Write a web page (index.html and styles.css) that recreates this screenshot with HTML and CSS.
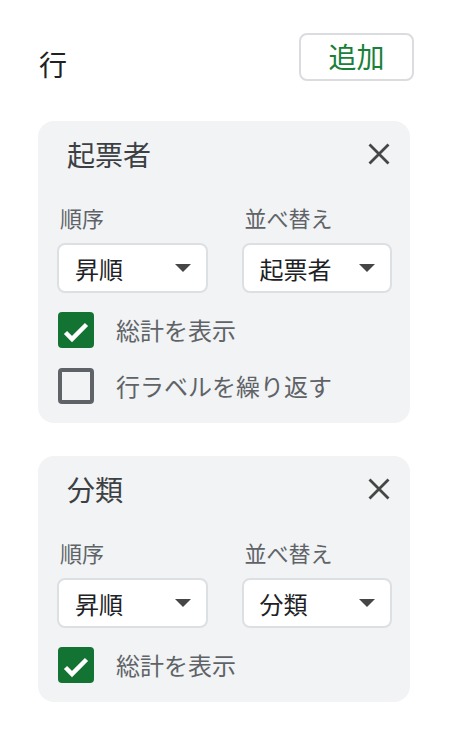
FILE: index.html
```html
<!DOCTYPE html>
<html lang="ja">
<head>
<meta charset="utf-8">
<link rel="stylesheet" href="styles.css">
</head>
<body>
<div class="panel">
  <div class="header">
    <div class="header-title">行</div>
    <button class="add-btn">追加</button>
  </div>

  <div class="card">
    <div class="card-head">
      <div class="card-title">起票者</div>
      <svg class="close" viewBox="0 0 24 24" width="24" height="24"><path d="M2.5 2.5 L21.5 21.5 M21.5 2.5 L2.5 21.5" stroke="#444746" stroke-width="2.8" fill="none"/></svg>
    </div>
    <div class="fields">
      <div class="field">
        <div class="field-label">順序</div>
        <div class="select"><span>昇順</span><svg class="caret" viewBox="0 0 16 8" width="16" height="8"><polygon points="0,0 16,0 8,8" fill="#444746"/></svg></div>
      </div>
      <div class="field">
        <div class="field-label">並べ替え</div>
        <div class="select"><span>起票者</span><svg class="caret" viewBox="0 0 16 8" width="16" height="8"><polygon points="0,0 16,0 8,8" fill="#444746"/></svg></div>
      </div>
    </div>
    <div class="check-row first">
      <span class="box checked"><svg viewBox="0 0 36 36" width="36" height="36"><path d="M7.5 20.5 L14 27 L28.5 12.5" stroke="#fff" stroke-width="4.5" fill="none"/></svg></span>
      <span class="check-label">総計を表示</span>
    </div>
    <div class="check-row">
      <span class="box"></span>
      <span class="check-label">行ラベルを繰り返す</span>
    </div>
  </div>

  <div class="card">
    <div class="card-head">
      <div class="card-title">分類</div>
      <svg class="close" viewBox="0 0 24 24" width="24" height="24"><path d="M2.5 2.5 L21.5 21.5 M21.5 2.5 L2.5 21.5" stroke="#444746" stroke-width="2.8" fill="none"/></svg>
    </div>
    <div class="fields">
      <div class="field">
        <div class="field-label">順序</div>
        <div class="select"><span>昇順</span><svg class="caret" viewBox="0 0 16 8" width="16" height="8"><polygon points="0,0 16,0 8,8" fill="#444746"/></svg></div>
      </div>
      <div class="field">
        <div class="field-label">並べ替え</div>
        <div class="select"><span>分類</span><svg class="caret" viewBox="0 0 16 8" width="16" height="8"><polygon points="0,0 16,0 8,8" fill="#444746"/></svg></div>
      </div>
    </div>
    <div class="check-row first">
      <span class="box checked"><svg viewBox="0 0 36 36" width="36" height="36"><path d="M7.5 20.5 L14 27 L28.5 12.5" stroke="#fff" stroke-width="4.5" fill="none"/></svg></span>
      <span class="check-label">総計を表示</span>
    </div>
  </div>
</div>
</body>
</html>
```

FILE: styles.css
```css
* { box-sizing: border-box; }

html, body {
  margin: 0;
  padding: 0;
  background: #ffffff;
}

body {
  font-family: "Noto Sans CJK JP", "Noto Sans", Roboto, sans-serif;
  color: #202124;
}

.panel {
  width: 452px;
  padding-bottom: 20px;
}

.header {
  display: flex;
  justify-content: space-between;
  align-items: flex-start;
  padding: 33px 38px 0 39px;
}

.header-title {
  font-size: 28px;
  line-height: 28px;
  margin-top: 17px;
  color: #202124;
}

.add-btn {
  width: 115px;
  height: 48px;
  border: 2px solid #dadce0;
  border-radius: 8px;
  background: #ffffff;
  color: #188038;
  font-family: inherit;
  font-size: 28px;
  line-height: 40px;
  padding: 0 0 2px 0;
  text-align: center;
}

.card {
  background: #f1f3f4;
  border-radius: 16px;
  margin: 40px 42px 0 38px;
  padding: 19px 18px 19px 19px;
}

.card + .card {
  margin-top: 33px;
}

.card-head {
  display: flex;
  align-items: center;
  justify-content: space-between;
  height: 28px;
  padding-left: 10px;
}

.card-title {
  font-size: 28px;
  line-height: 28px;
  color: #3c4043;
}

.close {
  display: block;
  margin-right: 1px;
}

.fields {
  display: grid;
  grid-template-columns: 1fr 1fr;
  column-gap: 34px;
  margin-top: 38px;
}

.field {
  display: flex;
  flex-direction: column;
}

.field-label {
  font-size: 22px;
  line-height: 22px;
  color: #5f6368;
  padding-left: 3px;
}

.select {
  margin-top: 15px;
  height: 50px;
  background: #ffffff;
  border: 2px solid #dde0e3;
  border-radius: 8px;
  display: flex;
  align-items: center;
  justify-content: space-between;
  padding: 0 15px 0 16px;
  font-size: 24px;
  color: #202124;
}

.caret {
  display: block;
}

.check-row {
  display: flex;
  align-items: center;
  height: 36px;
  margin-top: 20px;
  padding-left: 1px;
}

.check-row.first {
  margin-top: 19px;
}

.box {
  width: 36px;
  height: 36px;
  border: 4px solid #5f6368;
  border-radius: 4px;
  flex: none;
  display: block;
}

.box.checked {
  border: none;
  background: #137333;
}

.box svg {
  display: block;
}

.check-label {
  margin-left: 22px;
  font-size: 24px;
  line-height: 36px;
  color: #5f6368;
}
```
